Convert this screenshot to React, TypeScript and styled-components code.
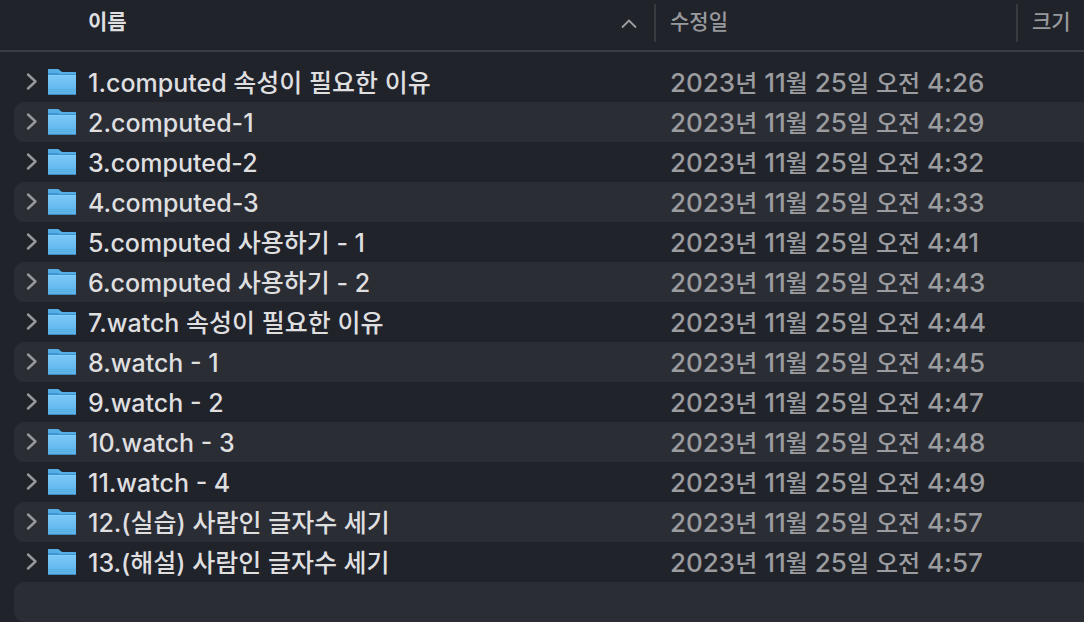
import React from "react";
import styled, { createGlobalStyle } from "styled-components";

const GlobalStyle = createGlobalStyle`
  * { box-sizing: border-box; }
  body {
    margin: 0;
    background: #21232b;
    color: #dfdfe0;
    font-family: Inter, "Noto Sans CJK KR", sans-serif;
    font-size: 25px;
    font-weight: 500;
    line-height: 40px;
    overflow: hidden;
  }
`;

const Table = styled.table`
  width: 100%;
  table-layout: fixed;
  border-collapse: separate;
  border-spacing: 0;
`;

const Col = styled.col<{ $width?: number }>`
  width: ${({ $width }) => ($width ? `${$width}px` : "auto")};
`;

const HeaderCell = styled.th`
  height: 52px;
  padding: 4px 0 8px;
  border-bottom: 2px solid #3a3c43;
  color: #98999c;
  font-size: 21px;
  font-weight: 500;
  line-height: 36px;
  text-align: left;
  white-space: nowrap;
`;

const HeaderLabel = styled.div`
  height: 38px;
  padding-left: 14px;
  border-left: 2px solid #393a3f;
`;

const SortButton = styled.button`
  display: flex;
  justify-content: space-between;
  width: 100%;
  height: 38px;
  padding: 0 16px 0 88px;
  border: 0;
  background: none;
  color: #dfdfe0;
  font: inherit;
  font-weight: 700;
  text-align: left;
`;

const SortArrow = styled.svg`
  width: 18px;
  height: 12px;
  margin-top: 14px;
`;

const Body = styled.tbody`
  &::before {
    content: "";
    display: block;
    height: 10px;
  }
`;

const Row = styled.tr<{ $striped: boolean }>`
  --row: ${({ $striped }) => ($striped ? "#2b2d35" : "transparent")};
`;

const Cell = styled.td`
  height: 40px;
  padding: 0 0 0 16px;
  background: var(--row);
  color: #9b9c9f;
  white-space: nowrap;
`;

const NameCell = styled.td`
  height: 40px;
  padding: 0 0 0 14px;
`;

const NameContent = styled.div`
  display: flex;
  align-items: center;
  height: 40px;
  padding-left: 10px;
  border-radius: 10px 0 0 10px;
  background: var(--row);
  white-space: nowrap;
`;

const Disclosure = styled.button`
  display: flex;
  width: 24px;
  height: 40px;
  padding: 10px 0 0 2px;
  border: 0;
  background: none;
`;

const FolderIcon = styled.svg`
  flex: none;
  width: 28px;
  height: 30px;
  margin-right: 12px;
`;

const Hangul = styled.span`
  font-family: "Noto Sans CJK KR", sans-serif;
  font-size: 25px;
  line-height: 1;
`;

const Text = styled.span<{ $date?: boolean }>`
  display: block;
  padding-top: 2px;
  font-size: ${({ $date }) => ($date ? "26px" : "25px")};
  line-height: 38px;

  ${Hangul} {
    font-size: ${({ $date }) => ($date ? "24px" : "25px")};
  }
`;

const MixedText = ({ text, date }: { text: string; date?: boolean }) => (
  <Text $date={date}>
    {text.split(/([가-힣]+)/).map((run, i) =>
      i % 2 ? <Hangul key={i}>{run}</Hangul> : run
    )}
  </Text>
);

const Folder = () => (
  <FolderIcon viewBox="0 0 28 30" aria-hidden="true">
    <path d="M0 3Q0 2 1 2H9Q11 2 12 3.5Q13 5 15 5H27Q28 5 28 6V26H0Z" fill="#3d93d4" />
    <path d="M0 3Q0 2 1 2H9Q11 2 12 3.5Q13 5 15 5H27Q28 5 28 6V7H12Q10 6 9 6H0Z" fill="#56aee5" />
    <rect y="8" width="28" height="20" rx="1" fill="url(#folderFront)" />
    <path d="M0 8.5H28" stroke="#82ccf5" />
    <path d="M0 22.5H28M0 24.5H28" stroke="#57aee2" />
    <path d="M1 27.5H27" stroke="#3987bd" />
  </FolderIcon>
);

const folders = [
  ["1.computed 속성이 필요한 이유", "4:26"],
  ["2.computed-1", "4:29"],
  ["3.computed-2", "4:32"],
  ["4.computed-3", "4:33"],
  ["5.computed 사용하기 - 1", "4:41"],
  ["6.computed 사용하기 - 2", "4:43"],
  ["7.watch 속성이 필요한 이유", "4:44"],
  ["8.watch - 1", "4:45"],
  ["9.watch - 2", "4:47"],
  ["10.watch - 3", "4:48"],
  ["11.watch - 4", "4:49"],
  ["12.(실습) 사람인 글자수 세기", "4:57"],
  ["13.(해설) 사람인 글자수 세기", "4:57"],
];

const Gradients = styled.svg`
  display: block;
  width: 0;
  height: 0;
`;

export default function App() {
  return (
    <>
      <GlobalStyle />
      <Gradients aria-hidden="true">
        <linearGradient id="folderFront" x1="0" y1="0" x2="0" y2="1">
          <stop offset="0" stopColor="#7bc9f7" />
          <stop offset="1" stopColor="#5ab2e8" />
        </linearGradient>
      </Gradients>
      <Table>
        <colgroup>
          <Col />
          <Col $width={362} />
          <Col $width={68} />
        </colgroup>
        <thead>
          <tr>
            <HeaderCell aria-sort="ascending">
              <SortButton type="button">
                이름
                <SortArrow viewBox="0 0 18 12" aria-hidden="true">
                  <path d="M2 9.5L9 2.5L16 9.5" fill="none" stroke="#a0a1a4" strokeWidth="1.8" />
                </SortArrow>
              </SortButton>
            </HeaderCell>
            <HeaderCell>
              <HeaderLabel>수정일</HeaderLabel>
            </HeaderCell>
            <HeaderCell>
              <HeaderLabel>크기</HeaderLabel>
            </HeaderCell>
          </tr>
        </thead>
        <Body>
          {folders.map(([name, time], i) => (
            <Row key={name} $striped={i % 2 === 1}>
              <NameCell>
                <NameContent>
                  <Disclosure type="button" aria-label={`${name} 펼치기`}>
                    <svg width="12" height="20" viewBox="0 0 12 20" aria-hidden="true">
                      <path d="M2 2.5L9.5 9.5L2 16.5" fill="none" stroke="#98999c" strokeWidth="2.4" strokeLinecap="round" strokeLinejoin="round" />
                    </svg>
                  </Disclosure>
                  <Folder />
                  <MixedText text={name} />
                </NameContent>
              </NameCell>
              <Cell>
                <MixedText date text={`2023년 11월 25일 오전 ${time}`} />
              </Cell>
              <Cell />
            </Row>
          ))}
          <Row $striped>
            <NameCell>
              <NameContent />
            </NameCell>
            <Cell />
            <Cell />
          </Row>
        </Body>
      </Table>
    </>
  );
}
